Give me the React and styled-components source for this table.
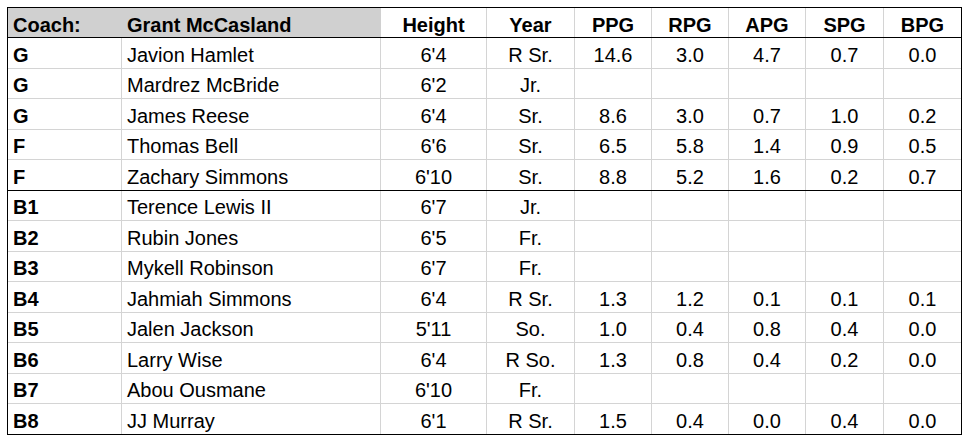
import React from 'react';
import styled, { createGlobalStyle } from 'styled-components';

const GRID = '#d4d4d4';
const SHADE = '#d0d0d0';
const COLUMNS = '114px 259px 106px 88px 77px 77px 77px 78px 77px';

const GlobalStyle = createGlobalStyle`
  html, body {
    margin: 0;
    padding: 0;
    background: #fff;
  }
  body {
    font-family: "Liberation Sans", Arial, sans-serif;
    color: #000;
  }
`;

const Page = styled.div`
  padding: 7px 0 0 7px;
`;

const Sheet = styled.div`
  display: inline-flex;
  flex-direction: column;
  border: 1px solid #000;
  background: #fff;
`;

const Row = styled.div`
  display: grid;
  grid-template-columns: ${COLUMNS};
  height: ${p => (p.head ? '30px' : '30.5px')};
  box-sizing: border-box;
  border-bottom: 1px solid ${p => (p.divider ? '#000' : GRID)};

  &:last-child {
    border-bottom: 0;
    height: 30px;
  }
`;

const Cell = styled.div`
  display: flex;
  align-items: center;
  justify-content: ${p => (p.left ? 'flex-start' : 'center')};
  box-sizing: border-box;
  padding: 5px ${p => (p.left ? '5px' : '0')} 0;
  font-size: 20px;
  font-weight: ${p => (p.bold ? 700 : 400)};
  background: ${p => (p.shaded ? SHADE : 'transparent')};
  border-right: 1px solid ${p => (p.shaded ? SHADE : GRID)};
  white-space: nowrap;
  overflow: hidden;

  &:last-child {
    border-right: 0;
  }
`;

const stats = ['Height', 'Year', 'PPG', 'RPG', 'APG', 'SPG', 'BPG'];

const players = [
  ['G', 'Javion Hamlet', "6'4", 'R Sr.', '14.6', '3.0', '4.7', '0.7', '0.0'],
  ['G', 'Mardrez McBride', "6'2", 'Jr.', '', '', '', '', ''],
  ['G', 'James Reese', "6'4", 'Sr.', '8.6', '3.0', '0.7', '1.0', '0.2'],
  ['F', 'Thomas Bell', "6'6", 'Sr.', '6.5', '5.8', '1.4', '0.9', '0.5'],
  ['F', 'Zachary Simmons', "6'10", 'Sr.', '8.8', '5.2', '1.6', '0.2', '0.7'],
  ['B1', 'Terence Lewis II', "6'7", 'Jr.', '', '', '', '', ''],
  ['B2', 'Rubin Jones', "6'5", 'Fr.', '', '', '', '', ''],
  ['B3', 'Mykell Robinson', "6'7", 'Fr.', '', '', '', '', ''],
  ['B4', 'Jahmiah Simmons', "6'4", 'R Sr.', '1.3', '1.2', '0.1', '0.1', '0.1'],
  ['B5', 'Jalen Jackson', "5'11", 'So.', '1.0', '0.4', '0.8', '0.4', '0.0'],
  ['B6', 'Larry Wise', "6'4", 'R So.', '1.3', '0.8', '0.4', '0.2', '0.0'],
  ['B7', 'Abou Ousmane', "6'10", 'Fr.', '', '', '', '', ''],
  ['B8', 'JJ Murray', "6'1", 'R Sr.', '1.5', '0.4', '0.0', '0.4', '0.0'],
];

export default function App() {
  return (
    <Page>
      <GlobalStyle />
      <Sheet>
        <Row head divider>
          <Cell left bold shaded>Coach:</Cell>
          <Cell left bold shaded>Grant McCasland</Cell>
          {stats.map(s => (
            <Cell key={s} bold>{s}</Cell>
          ))}
        </Row>
        {players.map(([pos, name, ...rest], i) => (
          <Row key={name} divider={i === 4}>
            <Cell left bold>{pos}</Cell>
            <Cell left>{name}</Cell>
            {rest.map((v, j) => (
              <Cell key={j}>{v}</Cell>
            ))}
          </Row>
        ))}
      </Sheet>
    </Page>
  );
}
